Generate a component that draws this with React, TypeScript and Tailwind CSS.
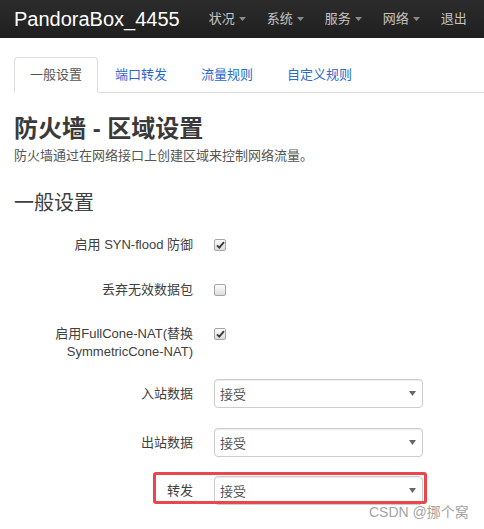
import React from "react";

const font = "font-['Liberation_Sans','Noto_Sans_CJK_SC',sans-serif]";

function Caret() {
  return (
    <svg width="7" height="4" viewBox="0 0 7 4" className="ml-[4px]">
      <path d="M0 0h7L3.5 4z" fill="#8a8a8a" />
    </svg>
  );
}

function Check({ checked }: { checked: boolean }) {
  return (
    <span className="mt-[3px] flex h-[12px] w-[12px] items-center justify-center rounded-[2px] border border-[#a6a6a6] bg-gradient-to-b from-[#fdfdfd] to-[#dcdcdc]">
      {checked && (
        <svg width="9" height="8" viewBox="0 0 9 8">
          <path d="M1 4.4 3.3 6.6 8 1.2" fill="none" stroke="#3a3a3a" strokeWidth="1.9" />
        </svg>
      )}
    </span>
  );
}

function SelectBox() {
  return (
    <div className="flex h-[29px] w-[209px] items-center justify-between rounded-[4px] border border-[#cccccc] bg-white pl-[5px] pr-[6px] shadow-[inset_0_1px_1px_rgba(0,0,0,0.075)]">
      <span className="mt-[3px] text-[13px] text-[#555]">接受</span>
      <svg width="7" height="5" viewBox="0 0 7 5">
        <path d="M0 0h7L3.5 5z" fill="#666" />
      </svg>
    </div>
  );
}

const menu = ["状况", "系统", "服务", "网络"];
const tabs = ["端口转发", "流量规则", "自定义规则"];

export default function App() {
  return (
    <div className={`relative min-h-[529px] w-[484px] bg-white ${font}`}>
      {/* Navbar */}
      <nav className="flex h-[38px] items-center bg-gradient-to-b from-[#2c2c2c] to-[#1f1f1f] pl-[14px]">
        <span className="text-[20px] leading-none text-white">PandoraBox_4455</span>
        <div className="ml-[29px] flex items-center gap-[21px] text-[13px] text-[#c4c4c4]">
          {menu.map((m) => (
            <span key={m} className="flex items-center">
              {m}
              <Caret />
            </span>
          ))}
          <span>退出</span>
        </div>
      </nav>

      <div className="pl-[14px]">
        {/* Tabs */}
        <ul className="mt-[19px] flex border-b border-[#dddddd]">
          <li className="-mb-px flex h-[36px] items-center rounded-t-[4px] border border-[#dddddd] border-b-white bg-white px-[15px] text-[13px] text-[#555]">
            一般设置
          </li>
          {tabs.map((t) => (
            <li key={t} className="-mb-px flex h-[36px] items-center px-[17px] text-[13px] text-[#2a6ad0]">
              {t}
            </li>
          ))}
        </ul>

        <h2 className="mt-[22px] text-[24px] font-bold leading-[28px] text-[#3a3a3a]">防火墙 - 区域设置</h2>
        <p className="mt-[4px] text-[13px] leading-[18px] text-[#555]">防火墙通过在网络接口上创建区域来控制网络流量。</p>

        <h3 className="mt-[25px] text-[20px] font-normal leading-[26px] text-[#404040]">一般设置</h3>

        {/* Form */}
        <div className="grid grid-cols-[179px_1fr] gap-x-[21px] text-[13px] leading-[18px] text-[#404040]">
          <div className="mt-[20px] text-right">启用 SYN-flood 防御</div>
          <div className="mt-[20px] flex">
            <Check checked />
          </div>

          <div className="mt-[27px] text-right">丢弃无效数据包</div>
          <div className="mt-[27px] flex">
            <Check checked={false} />
          </div>

          <div className="mt-[26px] text-right">
            启用FullCone-NAT(替换
            <br />
            SymmetricCone-NAT)
          </div>
          <div className="mt-[26px] flex">
            <Check checked />
          </div>

          <div className="mt-[18px] flex items-center justify-end">入站数据</div>
          <div className="mt-[18px]">
            <SelectBox />
          </div>

          <div className="mt-[20px] flex items-center justify-end">出站数据</div>
          <div className="mt-[20px]">
            <SelectBox />
          </div>

          <div className="relative col-span-2 mt-[19px] grid grid-cols-[179px_1fr] gap-x-[21px]">
            <div className="flex items-center justify-end">转发</div>
            <SelectBox />
            <div className="absolute left-[139px] top-[-4px] h-[32px] w-[274px] rounded-[3px] border-[3px] border-[#e8474c]" />
          </div>
        </div>
      </div>

      <div className="absolute left-[369px] top-[504px] text-[14px] leading-[17px] text-[#a3a3a3]">CSDN @挪个窝</div>
    </div>
  );
}
